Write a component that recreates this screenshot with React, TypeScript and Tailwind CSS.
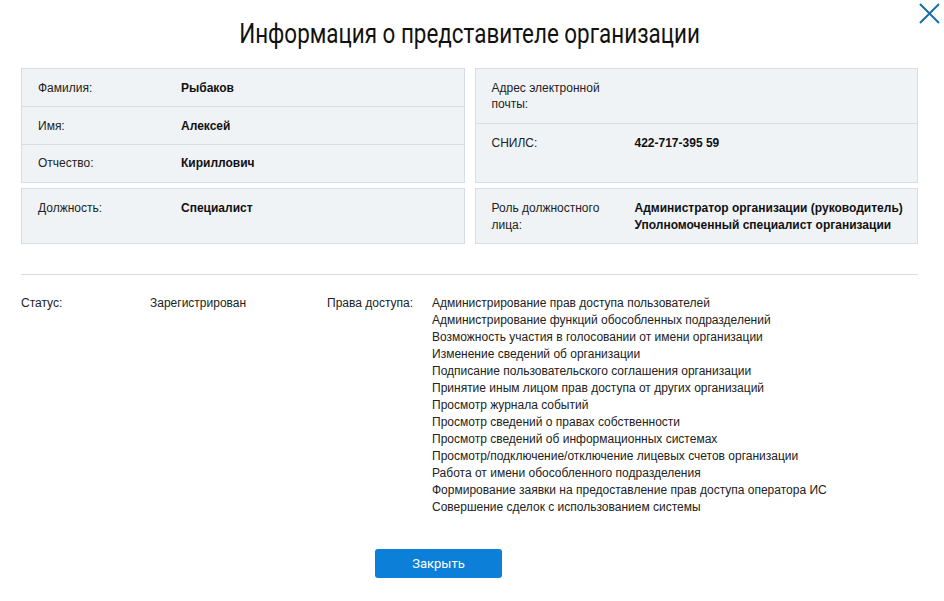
import React from "react"

const rights = [
    "Администрирование прав доступа пользователей",
    "Администрирование функций обособленных подразделений",
    "Возможность участия в голосовании от имени организации",
    "Изменение сведений об организации",
    "Подписание пользовательского соглашения организации",
    "Принятие иным лицом прав доступа от других организаций",
    "Просмотр журнала событий",
    "Просмотр сведений о правах собственности",
    "Просмотр сведений об информационных системах",
    "Просмотр/подключение/отключение лицевых счетов организации",
    "Работа от имени обособленного подразделения",
    "Формирование заявки на предоставление прав доступа оператора ИС",
    "Совершение сделок с использованием системы",
]

function Row({ label, value, className }: { label: string; value?: React.ReactNode; className?: string }) {
    return (
        <div className={"grid grid-cols-[143px_auto] pl-4 " + (className ?? "")}>
            <div className="w-[120px] text-[#222]">{label}</div>
            <div className="font-bold text-[#111]">{value}</div>
        </div>
    )
}

export default function App() {
    return (
        <div className="relative w-[944px] h-[601px] bg-white text-[12px] leading-[16px]" style={{ fontFamily: '"Liberation Sans", Arial, sans-serif' }}>
            <button className="absolute right-[4px] top-[3px] w-[21px] h-[21px]">
                <svg viewBox="0 0 21 21" width="21" height="21">
                    <path d="M1 1 L20 20 M20 1 L1 20" stroke="#1a6ea8" strokeWidth="2" fill="none" />
                </svg>
            </button>

            <div className="pl-[21px] pr-[26px]">
                <div className="flex justify-center pt-[17px] h-[68px]">
                    <h1 className="text-[27px] leading-[34px] text-[#111] origin-center scale-x-[0.83] whitespace-nowrap" style={{ fontFamily: 'Roboto, sans-serif' }}>
                        Информация о представителе организации
                    </h1>
                </div>

                <div className="grid grid-cols-2 gap-x-[10px] gap-y-[5px]">
                    <div className="bg-[#f0f3f6] border border-[#d8dde3]">
                        <Row label="Фамилия:" value="Рыбаков" className="h-[37px] pt-[11px]" />
                        <Row label="Имя:" value="Алексей" className="h-[38px] pt-[11px] border-t border-[#d8dde3]" />
                        <Row label="Отчество:" value="Кириллович" className="h-[37px] pt-[10px] border-t border-[#d8dde3]" />
                    </div>
                    <div className="bg-[#f0f3f6] border border-[#d8dde3]">
                        <Row label="Адрес электронной почты:" className="h-[54px] pt-[11px]" />
                        <Row label="СНИЛС:" value="422-717-395 59" className="h-[59px] pt-[11px] border-t border-[#d8dde3]" />
                    </div>
                    <div className="bg-[#f0f3f6] border border-[#d8dde3] h-[56px] pt-[11px]">
                        <Row label="Должность:" value="Специалист" />
                    </div>
                    <div className="bg-[#f0f3f6] border border-[#d8dde3] h-[56px] pt-[11px] leading-[17px]">
                        <Row
                            label="Роль должностного лица:"
                            value={
                                <>
                                    <div>Администратор организации (руководитель)</div>
                                    <div>Уполномоченный специалист организации</div>
                                </>
                            }
                        />
                    </div>
                </div>

                <div className="mt-[30px] border-t border-[#d9dde2]" />

                <div className="flex pt-[20px] leading-[17px] text-[#222]">
                    <div className="w-[129px]">Статус:</div>
                    <div className="w-[177px]">Зарегистрирован</div>
                    <div className="w-[105px]">Права доступа:</div>
                    <div className="flex flex-col">
                        {rights.map((r) => (
                            <div key={r}>{r}</div>
                        ))}
                    </div>
                </div>

                <div className="pl-[354px] pt-[33px]">
                    <button className="w-[127px] h-[29px] rounded-[3px] bg-[#0c7fd9] text-white text-[13px]" style={{ fontFamily: 'Roboto, sans-serif' }}>
                        Закрыть
                    </button>
                </div>
            </div>
        </div>
    )
}
